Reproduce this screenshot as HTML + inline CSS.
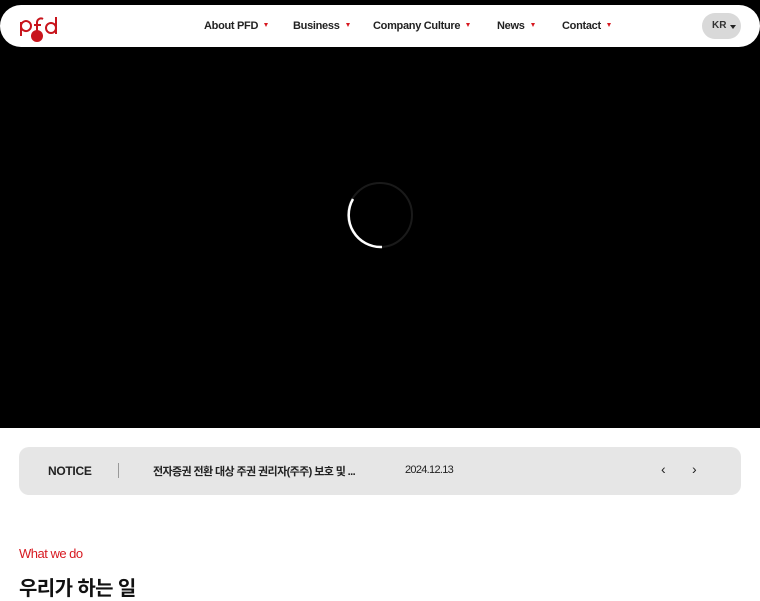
<!DOCTYPE html>
<html><head><meta charset="utf-8"><style>
*{margin:0;padding:0;box-sizing:border-box}
body{width:760px;height:600px;overflow:hidden;background:#fff;font-family:"Liberation Sans","Noto Sans CJK KR",sans-serif}
.hero{position:absolute;left:0;top:0;width:760px;height:428px;background:#000}
.hdr{position:absolute;left:0;top:5px;width:760px;height:42px;background:#fff;border-radius:21px}
.nav{position:absolute;top:19px;font-size:11px;font-weight:bold;color:#222;white-space:nowrap;letter-spacing:-0.3px}
.nav i{display:inline-block;width:0;height:0;border-left:2.5px solid transparent;border-right:2.5px solid transparent;border-top:4px solid #d71920;margin-left:6px;vertical-align:2px}
.kr{position:absolute;left:702px;top:13px;width:39px;height:26px;border-radius:13px;background:#d9d9d9}
.kr b{position:absolute;left:10px;top:7px;font-size:10px;color:#333}
.kr i{position:absolute;left:28px;top:12px;width:0;height:0;border-left:3px solid transparent;border-right:3px solid transparent;border-top:4px solid #222}
.notice{position:absolute;left:19px;top:447px;width:722px;height:48px;background:#e6e6e6;border-radius:10px}
.t{position:absolute;white-space:nowrap;color:#222}
</style></head><body>
<div class="hero"></div>
<svg style="position:absolute;left:346px;top:181px" width="68" height="68" viewBox="0 0 68 68">
<circle cx="34" cy="34" r="32" fill="none" stroke="#1a1a1a" stroke-width="2"/>
<path d="M7 18 A32 32 0 0 0 36 66" fill="none" stroke="#fff" stroke-width="2.5"/>
</svg>
<div class="hdr"></div>
<svg style="position:absolute;left:18px;top:14px" width="42" height="30" viewBox="0 0 42 30">
<g fill="none" stroke="#c8141c" stroke-width="2">
<path d="M3 22 V8 M3 12 a5 5 0 1 1 0 .1"/>
<path d="M19 20 V8 a4 4 0 0 1 6 -3 M16 11 H23"/>
<circle cx="33" cy="14" r="5"/><path d="M38 3 V20"/>
</g>
<circle cx="19" cy="22" r="6" fill="#c8141c"/>
</svg>
<div class="nav" style="left:204px;top:20px">About PFD<i></i></div>
<div class="nav" style="left:293px;top:20px">Business<i></i></div>
<div class="nav" style="left:373px;top:20px">Company Culture<i></i></div>
<div class="nav" style="left:497px;top:20px">News<i></i></div>
<div class="nav" style="left:562px;top:20px">Contact<i></i></div>
<div class="kr"><b>KR</b><i></i></div>
<div class="notice"></div>
<div class="t" style="left:48px;top:464px;font-size:12px;font-weight:bold;letter-spacing:-0.3px">NOTICE</div>
<div style="position:absolute;left:118px;top:463px;width:1px;height:15px;background:#999"></div>
<div class="t" style="left:153px;top:463px;font-size:11px;font-weight:bold;letter-spacing:-0.6px">전자증권 전환 대상 주권 권리자(주주) 보호 및 ...</div>
<div class="t" style="left:405px;top:464px;font-size:11px;letter-spacing:-0.7px">2024.12.13</div>
<div class="t" style="left:661px;top:461px;font-size:14px">‹</div>
<div class="t" style="left:692px;top:461px;font-size:14px">›</div>
<div class="t" style="left:19px;top:546px;font-size:13px;color:#d71920;letter-spacing:-0.5px">What we do</div>
<div class="t" style="left:19px;top:572px;font-size:20px;font-weight:bold;color:#111;letter-spacing:-0.6px">우리가 하는 일</div>
</body></html>
